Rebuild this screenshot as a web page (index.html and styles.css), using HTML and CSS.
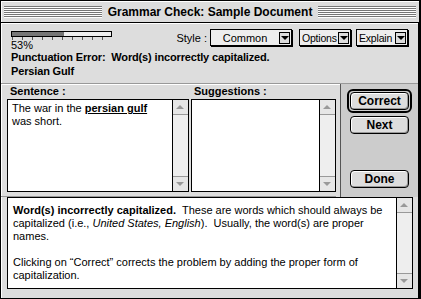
FILE: index.html
```html
<!DOCTYPE html>
<html lang="en">
<head>
  <meta charset="UTF-8">
  <title>Grammar Check: Sample Document</title>
  <link rel="stylesheet" href="styles.css">
</head>
<body>
  <div class="window">
    <!-- Barra de titulo -->
    <div class="titlebar">
      <span class="stripes"></span>
      <span class="title">Grammar Check: Sample Document</span>
      <span class="stripes"></span>
    </div>

    <div class="content">
      <div class="top">
        <div class="progress">
          <div class="bar"><div class="fill" style="width: 53%"></div></div>
          <div class="ticks"></div>
          <div class="pct">53%</div>
        </div>
        <div class="controls">
          <span class="style-label">Style :</span>
          <div class="popup popup-wide"><span class="popup-text">Common</span><span class="popup-arrow"></span></div>
          <div class="popup popup-options"><span class="popup-text">Options</span><span class="popup-arrow"></span></div>
          <div class="popup popup-explain"><span class="popup-text">Explain</span><span class="popup-arrow"></span></div>
        </div>
      </div>

      <div class="error">
        <p>Punctuation Error:&nbsp; Word(s) incorrectly capitalized.</p>
        <p>Persian Gulf</p>
      </div>

      <div class="middle">
        <div class="lists">
          <div class="col col-sentence">
            <div class="label">Sentence :</div>
            <div class="listbox">
              <div class="list-text">The war in the <b class="flag">persian gulf</b><br>was short.</div>
              <div class="scrollbar"><span class="arrow up"></span><span class="track"></span><span class="arrow down"></span></div>
            </div>
          </div>
          <div class="col col-suggest">
            <div class="label">Suggestions :</div>
            <div class="listbox">
              <div class="list-text"></div>
              <div class="scrollbar"><span class="arrow up"></span><span class="track"></span><span class="arrow down"></span></div>
            </div>
          </div>
        </div>
        <div class="buttons">
          <div class="default-ring"><button class="btn">Correct</button></div>
          <button class="btn">Next</button>
          <button class="btn btn-done">Done</button>
        </div>
      </div>

      <div class="explain">
        <div class="explain-text">
          <p><b>Word(s) incorrectly capitalized.</b>&nbsp; These are words which should always be<br>capitalized (i.e., <i>United States, English</i>).&nbsp; Usually, the word(s) are proper<br>names.</p>
          <p>Clicking on “Correct” corrects the problem by adding the proper form of<br>capitalization.</p>
        </div>
        <div class="scrollbar"><span class="arrow up"></span><span class="track"></span><span class="arrow down"></span></div>
      </div>
    </div>
  </div>
</body>
</html>
```

FILE: styles.css
```css
body {
  margin: 0;
  background: #ffffff;
  font-family: "Liberation Sans", Arial, sans-serif;
  font-size: 11px;
  color: #000;
}
p {
  margin: 0;
}
.window {
  width: 421px;
  height: 299px;
  box-sizing: border-box;
  border: 1px solid #000;
  border-right-width: 2px;
  background: #dddddd;
  display: flex;
  flex-direction: column;
}

/* Barra de titulo */
.titlebar {
  height: 21px;
  border-bottom: 1px solid #000;
  display: flex;
  align-items: center;
  padding: 0 3px;
  gap: 4px;
  box-shadow: inset 1px 1px 0 #fff;
}
.stripes {
  flex: 1;
  height: 12px;
  background: repeating-linear-gradient(#777 0 1px, #fff 1px 2px);
}
.title {
  font-weight: bold;
  font-size: 12px;
  padding: 0 2px;
}

.content {
  flex: 1;
  display: flex;
  flex-direction: column;
  border-right: 1px solid #000;
  box-shadow: inset 1px 1px 0 #fff;
}
.top {
  height: 27px;
  display: flex;
  align-items: flex-start;
}
.progress {
  margin: 8px 0 0 10px;
  width: 101px;
}
.bar {
  height: 4px;
  border: 1px solid #000;
  background: #eeeeee;
}
.fill {
  height: 100%;
  background: #777777;
}
.ticks {
  height: 3px;
  margin: 0 1px;
  background: repeating-linear-gradient(90deg, #555 0 1px, transparent 1px 10px);
}
.pct {
  line-height: 11px;
}
.controls {
  margin: 6px 10px 0 auto;
  display: flex;
  align-items: center;
}
.style-label {
  margin-right: 3px;
}
.popup {
  height: 15px;
  box-sizing: content-box;
  border: 1px solid #000;
  box-shadow: 1px 1px 0 #000;
  background: #eeeeee;
  display: flex;
  align-items: center;
  padding-left: 2px;
}
.popup-text {
  flex: 1;
  overflow: hidden;
  white-space: nowrap;
  font-size: 10.5px;
  letter-spacing: -0.2px;
}
.popup-wide {
  width: 80px;
  padding-left: 0;
  margin-right: 7px;
}
.popup-wide .popup-text {
  text-align: center;
  font-size: 11px;
  letter-spacing: 0;
}
.popup-options {
  width: 48px;
  margin-right: 5px;
}
.popup-explain {
  width: 48px;
}
.popup-arrow {
  flex-shrink: 0;
  width: 11px;
  height: 12px;
  margin-right: 1px;
  border: 1px solid #000;
  box-sizing: border-box;
  background: #ddd;
  position: relative;
}
.popup-arrow::after {
  content: "";
  position: absolute;
  left: 1px;
  top: 3px;
  border-left: 4px solid transparent;
  border-right: 4px solid transparent;
  border-top: 4px solid #000;
}

.error {
  height: 33px;
  padding: 0 10px;
  font-weight: bold;
  line-height: 14px;
  letter-spacing: -0.15px;
}

/* Zona central */
.middle {
  height: 113px;
  display: flex;
  border-top: 1px solid #999;
  box-shadow: inset 0 1px 0 #fff;
}
.lists {
  flex: 1;
  display: flex;
  gap: 2px;
  padding-left: 6px;
  border-bottom: 1px solid #999;
}
.col {
  display: flex;
  flex-direction: column;
}
.col-sentence {
  width: 182px;
}
.col-suggest {
  width: 145px;
}
.label {
  height: 14px;
  padding: 1px 0 0 3px;
  font-weight: bold;
}
.listbox {
  height: 93px;
  box-sizing: border-box;
  border: 1px solid #000;
  background: #fff;
  display: flex;
}
.list-text {
  flex: 1;
  padding: 2px 4px;
  line-height: 13px;
}
.flag {
  text-decoration: underline;
}
.scrollbar {
  width: 15px;
  border-left: 1px solid #000;
  display: flex;
  flex-direction: column;
  background: #eeeeee;
}
.arrow {
  height: 14px;
  position: relative;
  background: #e6e6e6;
}
.arrow.up {
  border-bottom: 1px solid #999;
}
.arrow.down {
  border-top: 1px solid #999;
}
.arrow::after {
  content: "";
  position: absolute;
  left: 3px;
  top: 5px;
  border-left: 4px solid transparent;
  border-right: 4px solid transparent;
}
.arrow.up::after {
  border-bottom: 4px solid #999;
}
.arrow.down::after {
  border-top: 4px solid #999;
}
.track {
  flex: 1;
}

.buttons {
  width: 77px;
  margin-left: 4px;
  border-left: 1px solid #555;
  background: #cccccc;
  display: flex;
  flex-direction: column;
  align-items: center;
  padding-top: 5px;
}
.default-ring {
  border: 2px solid #000;
  border-radius: 6px;
  padding: 1px;
  margin-bottom: 3px;
}
.btn {
  width: 59px;
  height: 18px;
  border: 1px solid #000;
  border-radius: 4px;
  background: #dddddd;
  box-shadow: inset 1px 1px 0 #fff, inset -1px -1px 0 #999;
  font-family: "Liberation Sans", Arial, sans-serif;
  font-weight: bold;
  font-size: 12px;
  padding: 0;
}
.btn-done {
  margin-top: auto;
  margin-bottom: 9px;
}

/* Explicacion */
.explain {
  height: 92px;
  margin: 0 5px 0 6px;
  box-sizing: border-box;
  border: 1px solid #000;
  background: #fff;
  display: flex;
}
.explain-text {
  flex: 1;
  padding: 6px 5px;
  line-height: 13px;
}
.explain-text p + p {
  margin-top: 13px;
}
```
